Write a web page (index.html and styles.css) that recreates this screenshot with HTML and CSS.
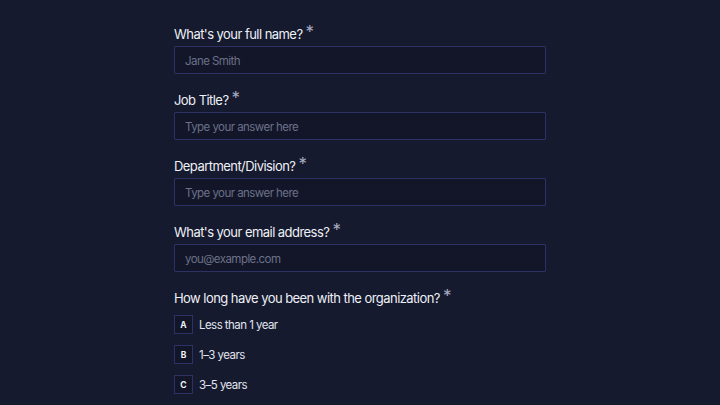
FILE: index.html
```html
<!DOCTYPE html>
<html lang="en">
<head>
    <meta charset="UTF-8">
    <meta name="viewport" content="width=device-width, initial-scale=1.0">
    <title>Employee Survey</title>
    <link rel="stylesheet" href="styles.css">
</head>
<body>
    <div class="form">
        <div class="field">
            <label class="question">What's your full name? <span class="req">*</span></label>
            <input class="answer" placeholder="Jane Smith">
        </div>
        <div class="field">
            <label class="question">Job Title? <span class="req">*</span></label>
            <input class="answer" placeholder="Type your answer here">
        </div>
        <div class="field">
            <label class="question">Department/Division? <span class="req">*</span></label>
            <input class="answer" placeholder="Type your answer here">
        </div>
        <div class="field">
            <label class="question">What's your email address? <span class="req">*</span></label>
            <input class="answer" placeholder="you@example.com">
        </div>
        <div class="field">
            <label class="question">How long have you been with the organization? <span class="req">*</span></label>
            <div class="choices">
                <div class="choice"><span class="key">A</span>Less than 1 year</div>
                <div class="choice"><span class="key">B</span>1–3 years</div>
                <div class="choice"><span class="key">C</span>3–5 years</div>
            </div>
        </div>
    </div>
</body>
</html>
```

FILE: styles.css
```css
*{
    margin: 0;
    padding: 0;
    box-sizing: border-box;
    font-family: Inter, "Noto Sans", sans-serif;
}
body{
    background-color: #151a2e;
    color: #eceef5;
}
.form{
    width: 372px;
    margin: auto;
    padding-top: 24px;
    display: flex;
    flex-direction: column;
    gap: 16px;
}
.field{
    display: flex;
    flex-direction: column;
    gap: 3px;
}
.question{
    padding-top: 1px;
    font-size: 13px;
    line-height: 18px;
    letter-spacing: -0.55px;
    color: #eef0f6;
}
.req{
    font-size: 17px;
    color: #a9adc2;
    vertical-align: 1px;
    line-height: 0;
}
.answer{
    height: 28px;
    width: 100%;
    background-color: #121628;
    border: 1px solid #2d3163;
    border-radius: 1px;
    padding-left: 10px;
    padding-top: 1px;
    font-size: 11.5px;
    letter-spacing: -0.55px;
    color: #eceef5;
    outline: none;
}
.answer::placeholder{
    color: #6c7189;
}
.choices{
    margin-top: 5px;
    display: flex;
    flex-direction: column;
    gap: 11px;
}
.choice{
    display: flex;
    align-items: center;
    gap: 6px;
    height: 19px;
    font-size: 11.5px;
    letter-spacing: -0.55px;
    color: #e2e4ee;
}
.key{
    width: 19px;
    height: 19px;
    border: 1px solid #2d3163;
    background-color: #121628;
    display: flex;
    align-items: center;
    justify-content: center;
    font-size: 8.5px;
    font-weight: 700;
    letter-spacing: 0;
    color: #f0f1f6;
}
```
